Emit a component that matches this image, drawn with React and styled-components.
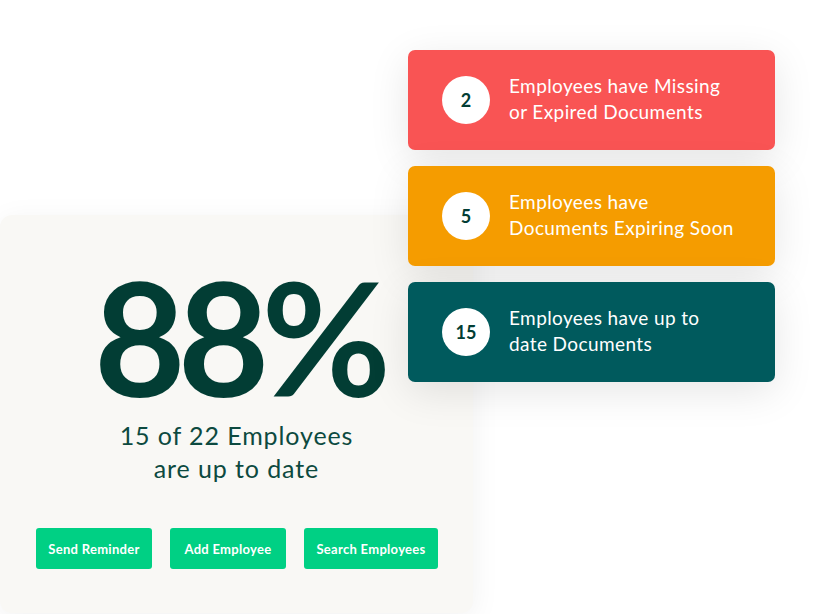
import React from "react";
import styled, { createGlobalStyle } from "styled-components";

const GlobalStyle = createGlobalStyle`
  html, body {
    margin: 0;
    padding: 0;
    background: #ffffff;
  }
  body {
    font-family: Lato, "Noto Sans", sans-serif;
  }
`;

const Stage = styled.div`
  width: 825px;
  height: 614px;
  display: grid;
  grid-template-columns: 408px 65px 302px 50px;
  grid-template-rows: 50px 165px 167px 1fr;
  overflow: hidden;
`;

const SummaryCard = styled.section`
  grid-column: 1 / 3;
  grid-row: 3 / 5;
  margin-bottom: 1px;
  background: #f9f8f5;
  border-radius: 12px;
  box-shadow: 0 6px 30px rgba(0, 0, 0, 0.06);
  display: flex;
  flex-direction: column;
  align-items: center;
  padding-top: 58px;
`;

const BigNumber = styled.div`
  font-size: 158px;
  font-weight: 700;
  line-height: 126px;
  color: #023d34;
  letter-spacing: -8px;
  margin-left: 4px;
`;

const Caption = styled.p`
  margin: 20px 0 0;
  font-size: 25px;
  line-height: 33px;
  color: #0d4a40;
  text-align: center;
  letter-spacing: 0.9px;
`;

const ButtonRow = styled.div`
  display: flex;
  gap: 18px;
  margin-top: 43px;
  margin-left: 1px;
`;

const ActionButton = styled.button`
  height: 41px;
  width: ${({ w }) => w}px;
  border: none;
  border-radius: 3px;
  background: #00d084;
  color: #ffffff;
  font-family: Lato, "Noto Sans", sans-serif;
  font-size: 13px;
  font-weight: 700;
  letter-spacing: 0.3px;
  padding: 0;
`;

const StatusStack = styled.div`
  grid-column: 2 / 4;
  grid-row: 2 / 4;
  display: flex;
  flex-direction: column;
  gap: 16px;
  z-index: 1;
`;

const StatusCard = styled.div`
  height: 100px;
  border-radius: 7px;
  background: ${({ bg }) => bg};
  display: flex;
  align-items: center;
  padding-left: 34px;
  gap: 19px;
  box-shadow: 0 10px 40px rgba(0, 0, 0, 0.1);
`;

const Count = styled.div`
  width: 48px;
  height: 48px;
  border-radius: 50%;
  background: #ffffff;
  color: #023d34;
  font-size: 18px;
  font-weight: 700;
  display: flex;
  align-items: center;
  justify-content: center;
  flex-shrink: 0;
`;

const StatusText = styled.div`
  color: #ffffff;
  font-size: 19px;
  line-height: 26px;
  letter-spacing: 0.4px;
  margin-top: -2px;
`;

const statuses = [
  { n: 2, bg: "#f95454", lines: ["Employees have Missing", "or Expired Documents"] },
  { n: 5, bg: "#f59c00", lines: ["Employees have", "Documents Expiring Soon"] },
  { n: 15, bg: "#005a5d", lines: ["Employees have up to", "date Documents"] },
];

export default function App() {
  return (
    <>
      <GlobalStyle />
      <Stage>
        <SummaryCard>
          <BigNumber>88%</BigNumber>
          <Caption>
            15 of 22 Employees
            <br />
            are up to date
          </Caption>
          <ButtonRow>
            <ActionButton w={116}>Send Reminder</ActionButton>
            <ActionButton w={116}>Add Employee</ActionButton>
            <ActionButton w={134}>Search Employees</ActionButton>
          </ButtonRow>
        </SummaryCard>
        <StatusStack>
          {statuses.map((s) => (
            <StatusCard key={s.n} bg={s.bg}>
              <Count>{s.n}</Count>
              <StatusText>
                {s.lines[0]}
                <br />
                {s.lines[1]}
              </StatusText>
            </StatusCard>
          ))}
        </StatusStack>
      </Stage>
    </>
  );
}
